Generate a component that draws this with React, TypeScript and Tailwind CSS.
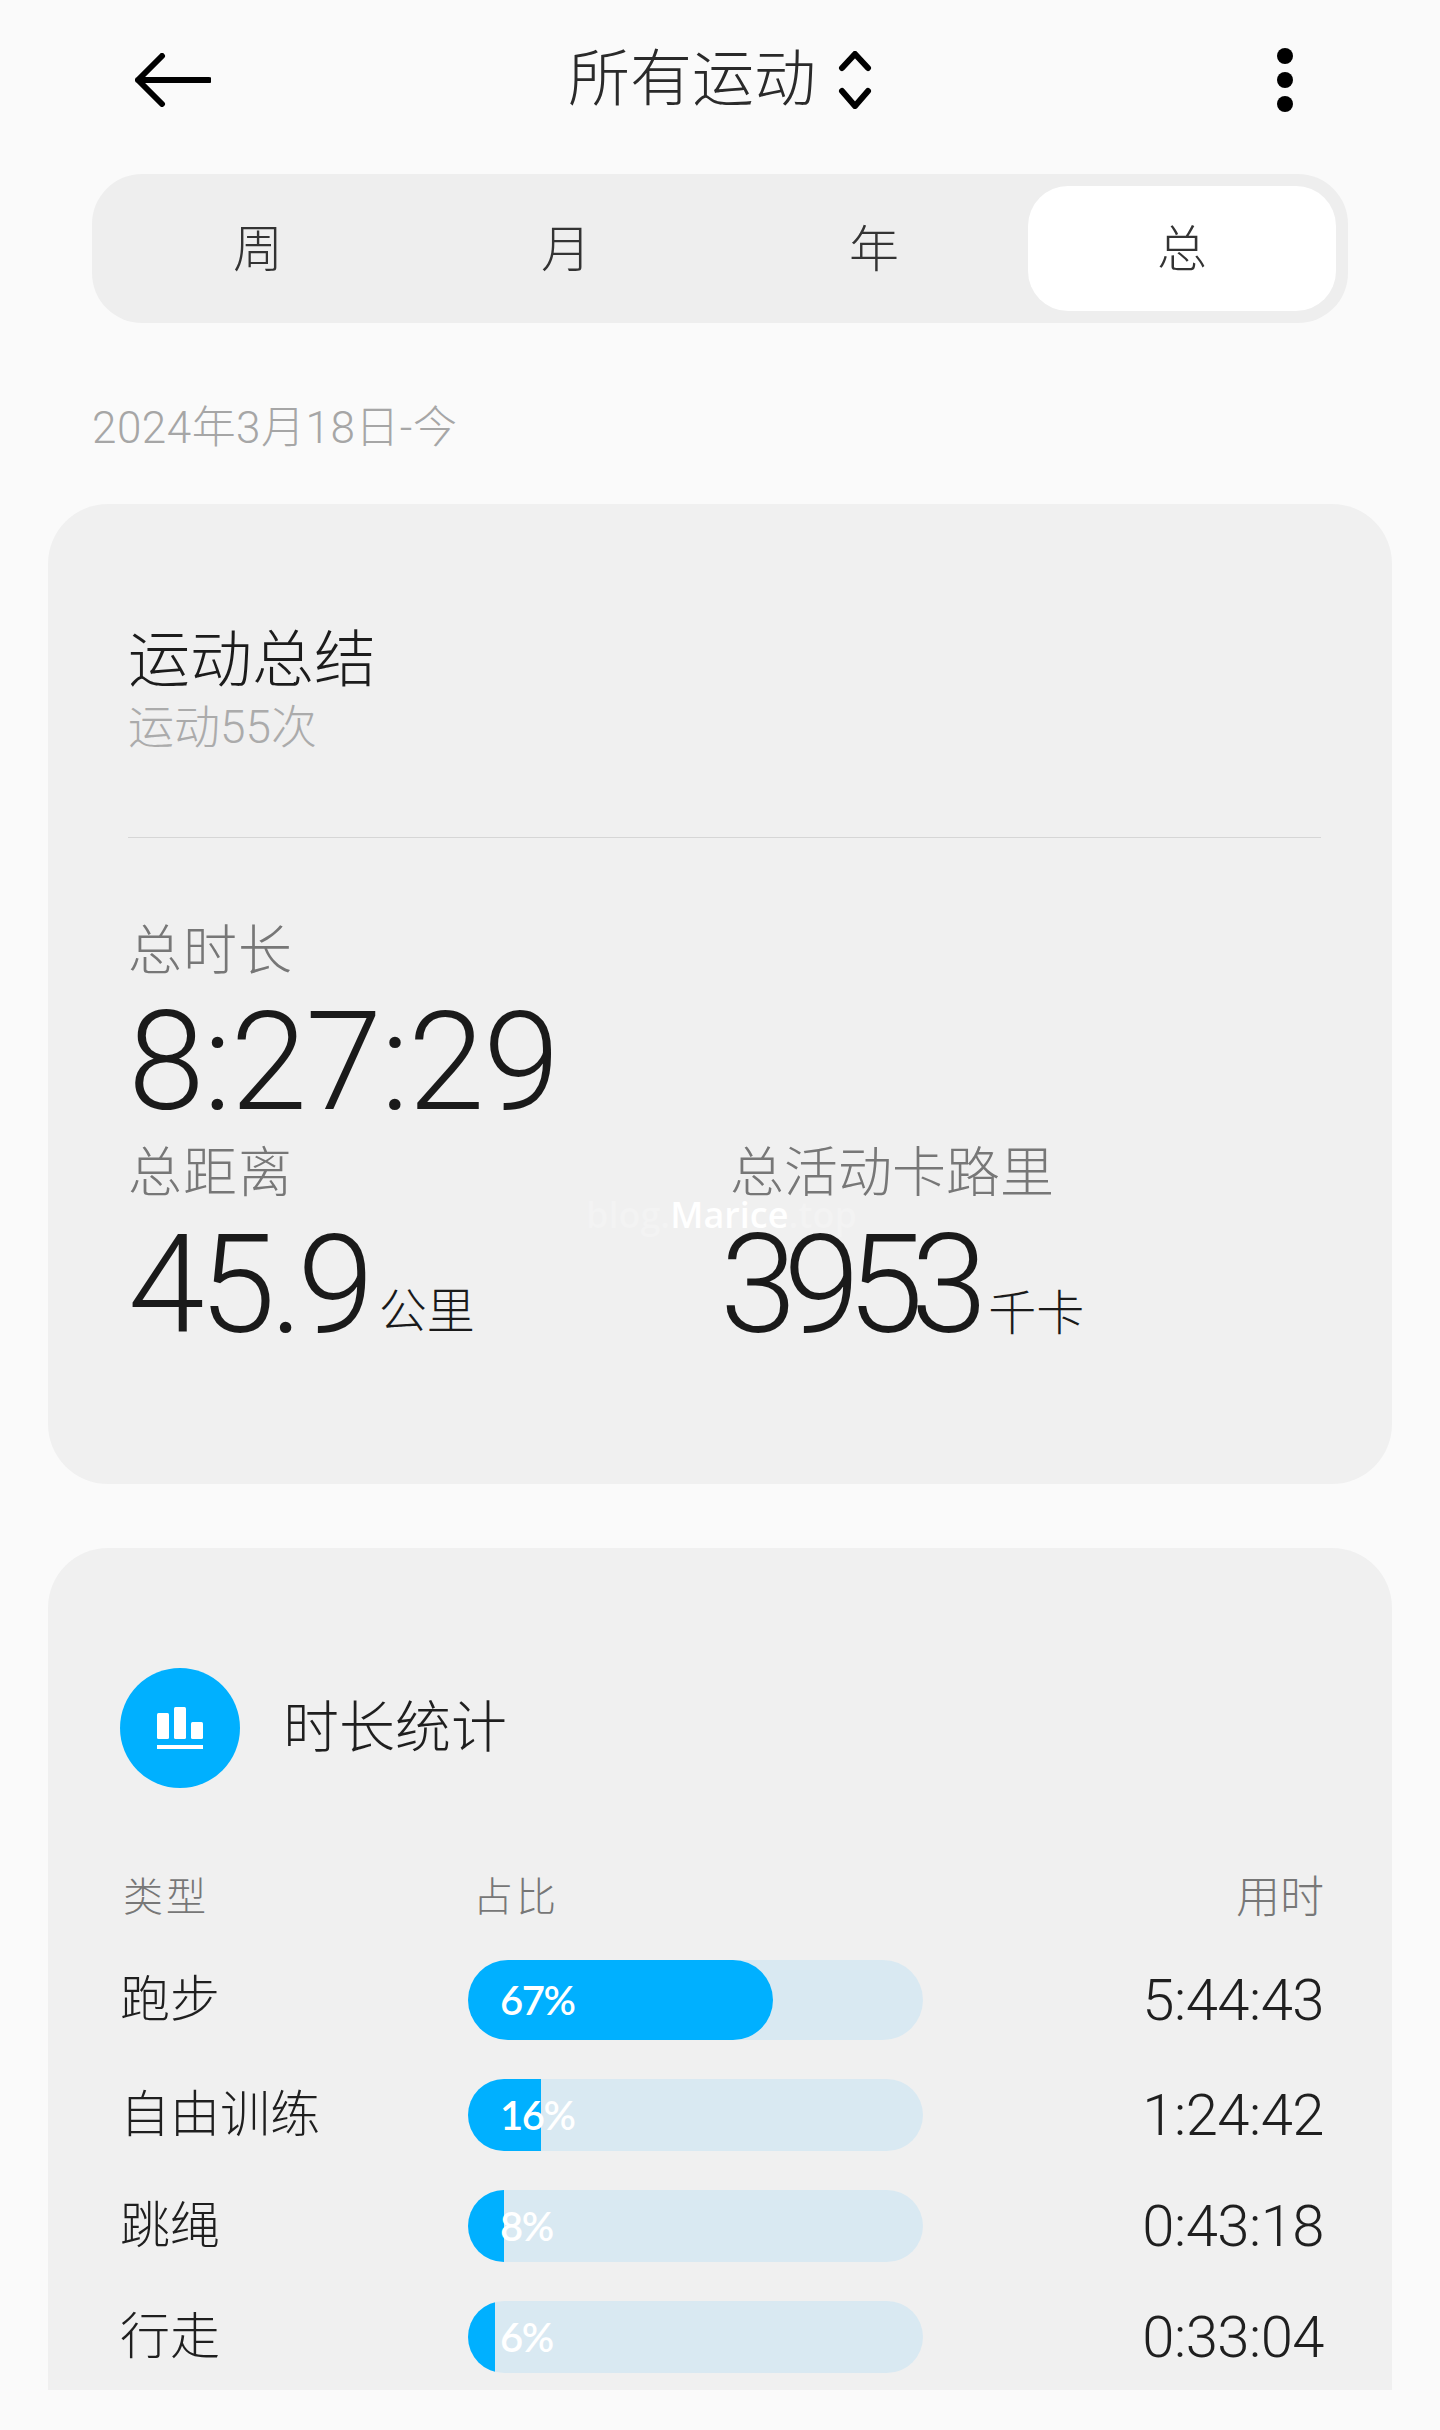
import React from "react";

const tabs = ["周", "月", "年", "总"];

const rows = [
  { name: "跑步", percent: 67, fill: 305, time: "5:44:43", height: "h-[80px]" },
  { name: "自由训练", percent: 16, fill: 73, time: "1:24:42", height: "h-[72px]" },
  { name: "跳绳", percent: 8, fill: 36, time: "0:43:18", height: "h-[72px]" },
  { name: "行走", percent: 6, fill: 27, time: "0:33:04", height: "h-[72px]" },
];

const font = "font-['Roboto','Noto_Sans_CJK_SC',sans-serif]";

function App() {
  return (
    <div className={`h-[2430px] w-[1440px] overflow-hidden bg-[#fafafa] font-light ${font}`}>
      {/* top bar */}
      <div className="grid h-[160px] grid-cols-[1fr_auto_1fr] items-center px-[135px]">
        <svg width="76" height="54" viewBox="0 0 76 54" fill="none" stroke="#000" strokeWidth="6" strokeLinecap="round" strokeLinejoin="round">
          <path d="M74 27H3M27 3 3 27l24 24" />
        </svg>
        <div className="flex items-center gap-[22px]">
          <span className="text-[62px] leading-[70px] text-[#2a2a2a]">所有运动</span>
          <svg width="34" height="58" viewBox="0 0 34 58" fill="none" stroke="#000" strokeWidth="6" strokeLinecap="round" strokeLinejoin="round">
            <path d="M4 17 17 3l13 14M4 40l13 15 13-15" />
          </svg>
        </div>
        <div className="mr-[12px] flex flex-col gap-[8px] justify-self-end">
          <div className="h-[16px] w-[16px] rounded-full bg-black" />
          <div className="h-[16px] w-[16px] rounded-full bg-black" />
          <div className="h-[16px] w-[16px] rounded-full bg-black" />
        </div>
      </div>

      {/* period switch */}
      <div className="mx-[92px] mt-[14px] grid h-[149px] w-[1256px] grid-cols-4 rounded-[50px] bg-[#eeeeee] p-[12px]">
        {tabs.map((t) => (
          <div
            key={t}
            className={`flex items-center justify-center rounded-[40px] pt-[4px] text-[50px] text-[#333] ${t === "总" ? "bg-white" : ""}`}
          >
            {t}
          </div>
        ))}
      </div>

      <div className="ml-[92px] mt-[75px] h-[60px] text-[44px] leading-[60px] tracking-[0.5px] text-[#a6a6a6]">
        2024年3月18日-今
      </div>

      {/* summary card */}
      <div className="relative mx-[48px] mt-[46px] h-[980px] rounded-[60px] bg-[#f0f0f0] pl-[80px] pr-[71px] pt-[122px]">
        <div className="text-[62px] leading-[70px] text-[#1c1c1c]">运动总结</div>
        <div className="mt-[6px] text-[46px] leading-[50px] text-[#ababab]">运动55次</div>
        <div className="mt-[85px] h-px bg-[#d6d6d6]" />
        <div className="mt-[84px] text-[54px] leading-[60px] tracking-[1px] text-[#777]">总时长</div>
        <div className="mt-[20px] text-[138px] leading-[120px] tracking-[-1.5px] text-[#1a1a1a]">8:27:29</div>

        <div className="mt-[22px] grid grid-cols-[602px_1fr]">
          <div>
            <div className="text-[54px] leading-[60px] tracking-[1px] text-[#777]">总距离</div>
            <div className="mt-[21px] flex items-baseline gap-[10px] leading-[120px] text-[#1a1a1a]">
              <span className="text-[138px] tracking-[-5.5px]">45.9</span>
              <span className="-translate-y-[4px] text-[48px]">公里</span>
            </div>
          </div>
          <div>
            <div className="text-[54px] leading-[60px] text-[#777]">总活动卡路里</div>
            <div className="-ml-[10px] mt-[21px] flex items-baseline gap-[14px] leading-[120px] text-[#1a1a1a]">
              <span className="text-[138px] tracking-[-13px]">3953</span>
              <span className="-translate-y-[2px] text-[48px]">千卡</span>
            </div>
          </div>
        </div>

        {/* watermark */}
        <div className="absolute left-[538px] top-[700px] font-['Open_Sans',sans-serif] text-[36px] font-semibold leading-[22px] text-white">
          <span className="opacity-20">blog.</span>
          Marice
          <span className="opacity-20">.top</span>
        </div>
      </div>

      {/* duration stats card */}
      <div className="mx-[48px] mt-[64px] h-[842px] rounded-t-[60px] bg-[#f0f0f0] pl-[72px] pr-[68px] pt-[120px]">
        <div className="flex items-center gap-[43px]">
          <div className="flex h-[120px] w-[120px] items-center justify-center rounded-full bg-[#00b0ff]">
            <svg width="46" height="42" viewBox="0 0 46 42" fill="#fff">
              <rect x="0" y="6" width="12" height="26" rx="1.5" />
              <rect x="17" y="0" width="12" height="32" rx="1.5" />
              <rect x="34" y="15" width="12" height="17" rx="1.5" />
              <rect x="0" y="38" width="46" height="4" />
            </svg>
          </div>
          <span className="text-[56px] leading-[70px] text-[#1f1f1f]">时长统计</span>
        </div>

        <div className="mt-[85px] grid grid-cols-[348px_455px_1fr] text-[40px] leading-[50px] text-[#777]">
          <span className="pl-[3px] tracking-[3px]">类型</span>
          <span className="pl-[5px] tracking-[3px]">占比</span>
          <span className="text-right text-[44px]">用时</span>
        </div>

        <div className="mt-[37px] flex flex-col gap-[39px]">
          {rows.map((r) => (
            <div key={r.name} className="grid grid-cols-[348px_455px_1fr] items-center">
              <span className="text-[50px] leading-[60px] text-[#1f1f1f]">{r.name}</span>
              <div className={`relative overflow-hidden rounded-full bg-[#d9e9f2] ${r.height}`}>
                <div
                  className={`h-full bg-[#00b0ff] ${r.percent > 50 ? "rounded-r-full" : ""}`}
                  style={{ width: r.fill }}
                />
                <span className="absolute left-[32px] top-1/2 -translate-y-1/2 font-['Lato',sans-serif] text-[40px] font-semibold leading-none tracking-[-1.5px] text-white">
                  {r.percent}%
                </span>
              </div>
              <span className="text-right text-[58px] leading-[60px] tracking-[-0.5px] text-[#1f1f1f]">{r.time}</span>
            </div>
          ))}
        </div>
      </div>
    </div>
  );
}

export default App;
